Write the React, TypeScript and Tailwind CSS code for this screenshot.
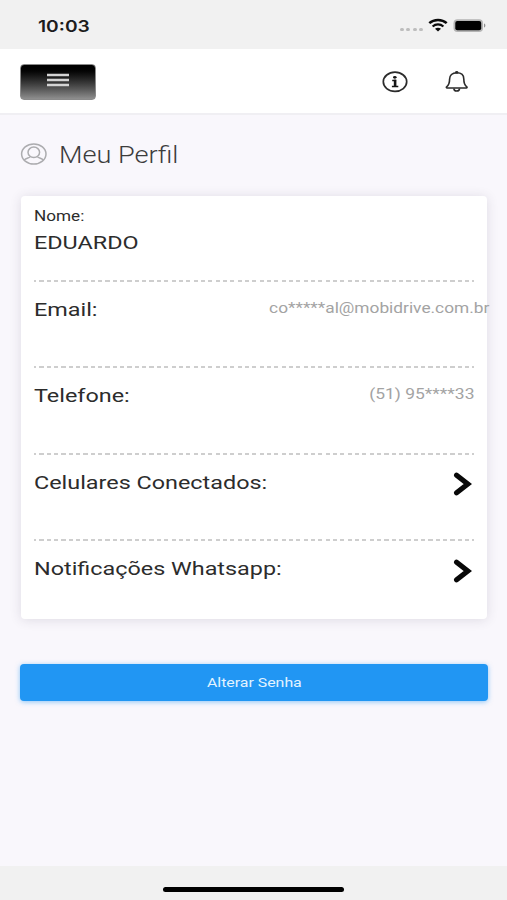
import React from 'react';

interface RowProps {
  label: string;
  last?: boolean;
  children?: React.ReactNode;
}

function StatusBar() {
  return (
    <div className="flex h-[49px] shrink-0 items-start justify-between bg-[#f1f1f1] pr-[20px] pl-[38px]">
      <span className="mt-[14px] origin-left scale-x-[1.2] font-['Inter',sans-serif] text-[16px] leading-6 font-semibold whitespace-nowrap text-[#1c1c1c]">
        10:03
      </span>
      <div className="mt-[18px] flex">
        <div className="mt-[10px] mr-[5px] flex gap-[2.5px]">
          <span className="h-[3px] w-[4px] rounded-full bg-[#bdbdbd]" />
          <span className="h-[3px] w-[4px] rounded-full bg-[#bdbdbd]" />
          <span className="h-[3px] w-[4px] rounded-full bg-[#bdbdbd]" />
          <span className="h-[3px] w-[4px] rounded-full bg-[#bdbdbd]" />
        </div>
        <svg viewBox="0 0 20 14" className="mr-[5px] h-[14px] w-[20px]" fill="none" stroke="#0a0a0a">
          <path d="M1.3 5.2C6 .8 14 .8 18.7 5.2" strokeWidth="2.5" />
          <path d="M4.6 8.5C7.7 5.7 12.3 5.7 15.4 8.5" strokeWidth="2.2" />
          <path d="M7 10.8C8.7 9.4 11.3 9.4 13 10.8L10 13.4Z" fill="#0a0a0a" stroke="none" />
        </svg>
        <svg viewBox="0 0 34 14" className="h-[14px] w-[34px]">
          <rect x="0.5" y="1.2" width="29.5" height="12.8" rx="4" fill="#b4b4b4" />
          <rect x="2.3" y="3" width="25.9" height="9.2" rx="2" fill="#000" />
          <path d="M31 5.5c1.8.5 1.8 3.5 0 4z" fill="#8f8f8f" />
        </svg>
      </div>
    </div>
  );
}

function Header() {
  return (
    <header className="flex h-[66px] shrink-0 items-start justify-between border-b-2 border-[#f0eff3] bg-white pr-[37px] pl-5">
      <button
        aria-label="Menu"
        className="mt-[14.5px] flex h-[36px] w-[76px] items-center justify-center rounded-[4px] border border-[#8a8a8a] bg-linear-to-b from-black to-[#8f8f8f]"
      >
        <svg viewBox="0 0 22 14" className="mb-[3px] h-[14px] w-[22px]" stroke="#d4d4d4" strokeWidth="2.4">
          <path d="M0 2h22M0 7h22M0 12h22" />
        </svg>
      </button>
      <div className="mt-[21px] flex gap-[36px]">
        <svg viewBox="0 0 26 24" className="h-[24px] w-[26px]" fill="none">
          <ellipse cx="13" cy="11.8" rx="11.7" ry="9.6" stroke="#2b2b2b" strokeWidth="1.7" />
          <ellipse cx="12.8" cy="7.3" rx="1.8" ry="1.4" fill="#151515" />
          <path d="M10.2 10.4h3.9M9.9 16.4h6.4" stroke="#151515" strokeWidth="1.5" />
          <path d="M13.1 9.7v7" stroke="#151515" strokeWidth="2.6" />
        </svg>
        <svg viewBox="0 0 26 24" className="h-[24px] w-[26px]" fill="none" stroke="#2b2b2b" strokeWidth="1.6">
          <path
            d="M12.700 2.800c-4.500 0-7.100 2.500-7.100 6.200 0 4.800-1.200 6.500-3 7.800-.5.5-.3 1.200.5 1.200h19.200c.8 0 1-.7.5-1.200-1.800-1.300-3-3-3-7.800 0-3.700-2.600-6.200-7.100-6.200z"
            strokeLinejoin="round"
          />
          <path d="M9.900 18.400c0 3.500 5.600 3.500 5.600 0" />
          <ellipse cx="12.700" cy="2.400" rx="1.700" ry="1.300" fill="#2b2b2b" stroke="none" />
        </svg>
      </div>
    </header>
  );
}

function ProfileIcon() {
  return (
    <svg viewBox="0 0 28 24" className="h-[24px] w-[28px]" fill="none" stroke="#acacaf" strokeWidth="1.5">
      <ellipse cx="13.8" cy="12" rx="12.2" ry="10.1" />
      <ellipse cx="13.8" cy="10.3" rx="5.8" ry="5.2" />
      <path d="M10.2 14.6c-.5 1.600-4.700 1.200-6.200 3.700M17.400 14.600c.5 1.600 4.700 1.200 6.200 3.700" />
    </svg>
  );
}

function Chevron() {
  return (
    <svg viewBox="0 0 20 26" className="mt-[16.4px] mr-px h-[26px] w-[20px]" fill="none">
      <path d="M3.6 4.2 14.8 13 3.6 21.8" stroke="#080808" strokeWidth="5.2" strokeLinecap="round" />
    </svg>
  );
}

function Divider() {
  return (
    <div className="h-[2px] w-full bg-[repeating-linear-gradient(90deg,#cecece_0_2.2px,transparent_2.2px_5.4px,#cecece_5.4px_7.34px)]" />
  );
}

function Row({ label, last, children }: RowProps) {
  return (
    <div className="flex h-[86.4px] flex-col">
      <div className="flex flex-1 items-start justify-between">
        <span className="mt-[14px] origin-left scale-x-[1.23] text-[19px] leading-7 whitespace-nowrap">
          {label}
        </span>
        {children}
      </div>
      {!last && <Divider />}
    </div>
  );
}

export default function App() {
  return (
    <div className="flex h-[900px] w-[507px] flex-col overflow-hidden bg-[#f9f7fc] font-['Roboto',sans-serif] text-[#2c2c2c]">
      <StatusBar />
      <Header />

      <main className="flex flex-1 flex-col px-5">
        <div className="mt-[25px] flex h-[28px] items-center">
          <ProfileIcon />
          <h1 className="mt-[3px] ml-[11px] origin-left scale-x-[1.18] text-[23px] leading-7 font-light whitespace-nowrap text-[#3c3c3c]">
            Meu Perfil
          </h1>
        </div>

        <section className="mt-[28px] ml-px h-[423px] rounded-[4px] bg-white px-[13px] shadow-[0_1px_12px_rgba(60,50,80,0.14)]">
          <div className="flex h-[86px] flex-col">
            <div className="flex flex-1 flex-col items-start">
              <span className="mt-[10px] origin-left scale-x-[1.225] text-[14px] leading-5 whitespace-nowrap">
                Nome:
              </span>
              <span className="mt-[3px] origin-left scale-x-[1.23] text-[19px] leading-7 whitespace-nowrap">
                EDUARDO
              </span>
            </div>
            <Divider />
          </div>
          <Row label="Email:">
            {/* Long addresses run past the right edge of the card. */}
            <span className="mt-[14px] -mr-[15px] origin-right scale-x-[1.235] text-[14px] leading-6 whitespace-nowrap text-[#a3a3a3]">
              co*****al@mobidrive.com.br
            </span>
          </Row>
          <Row label="Telefone:">
            <span className="mt-[14px] origin-right scale-x-[1.245] text-[14px] leading-6 whitespace-nowrap text-[#a3a3a3]">
              (51) 95****33
            </span>
          </Row>
          <Row label="Celulares Conectados:">
            <Chevron />
          </Row>
          <Row label="Notificações Whatsapp:" last>
            <Chevron />
          </Row>
        </section>

        <button className="mt-[45px] flex h-[37px] w-[468px] items-center justify-center rounded-[4px] bg-[#2196f3] shadow-[0_1px_5px_rgba(33,150,243,0.5)]">
          <span className="mt-[2px] scale-x-[1.27] text-[12.5px] whitespace-nowrap text-[#e3f3ff]">
            Alterar Senha
          </span>
        </button>
      </main>

      <footer className="flex h-[34px] shrink-0 items-start justify-center bg-[#f1f1f1]">
        <div className="mt-[21px] h-[5px] w-[181px] rounded-full bg-black" />
      </footer>
    </div>
  );
}
